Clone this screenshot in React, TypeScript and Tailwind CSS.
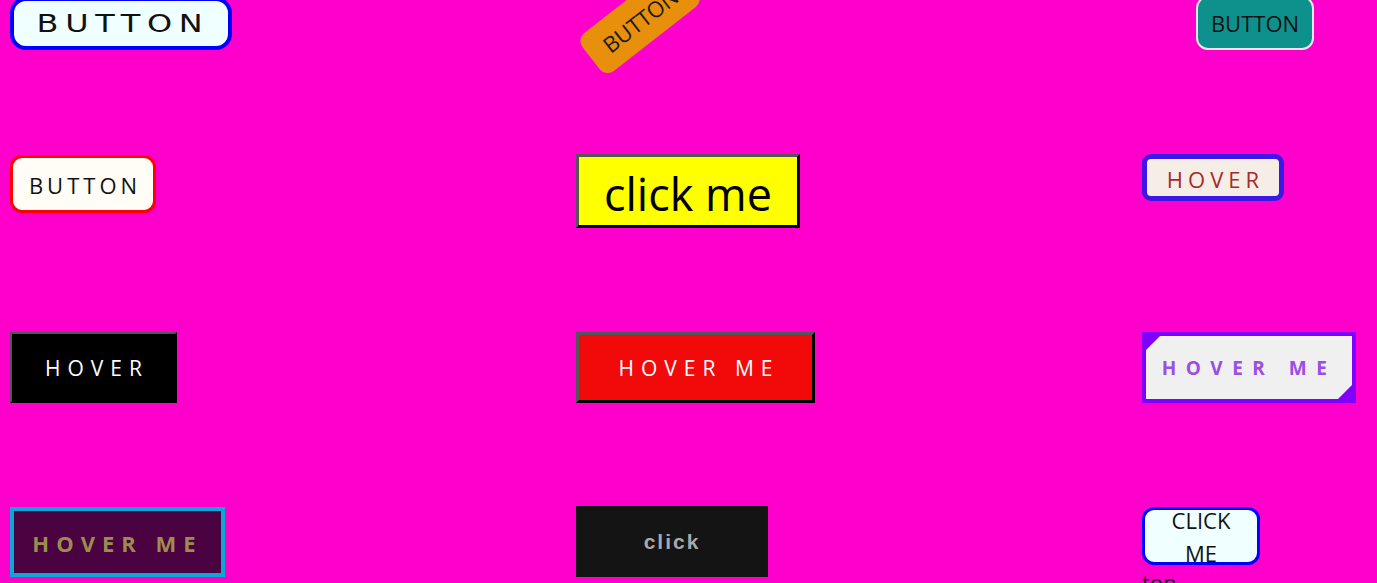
const sans = "font-['Open_Sans','Noto_Sans',sans-serif]";

export default function App() {
  return (
    <div className={`h-[583px] overflow-hidden bg-[#ff00cc] pl-[10px] ${sans}`}>
      {/* row 1 */}
      <div className="grid h-[154px] grid-cols-[566px_566px_1fr] items-start">
        <div>
          <button className="-mt-[3px] flex h-[53px] w-[222px] items-center justify-center rounded-[16px] border-4 border-[#0000ff] bg-[#f0ffff] pl-[4px]">
            <span className="inline-block origin-center scale-x-[1.33] font-['DejaVu_Sans',sans-serif] text-[24px] tracking-[5px] text-[#111]">
              BUTTON
            </span>
          </button>
        </div>
        <div>
          <button className="-mt-[4px] ml-[2px] flex h-[48px] w-[124px] -rotate-[38deg] items-center justify-center rounded-[10px] bg-[#e8900c] text-[22px] text-[#1a1a1a]">
            BUTTON
          </button>
        </div>
        <div>
          <button className="-mt-[4px] ml-[54px] flex h-[54px] w-[118px] items-center justify-center rounded-[12px] border-2 border-[#e8e8e8] bg-[#0e918c] text-[22px] text-[#111]">
            BUTTON
          </button>
        </div>
      </div>

      {/* row 2 */}
      <div className="grid h-[178px] grid-cols-[566px_566px_1fr] items-start">
        <div>
          <button className="mt-px flex h-[58px] w-[146px] items-center justify-center rounded-[12px] border-[3px] border-[#ff0000] bg-[#fffdf6] pl-[4px] pt-[2px] text-[22px] tracking-[4px] text-[#111]">
            BUTTON
          </button>
        </div>
        <div>
          <button className="flex h-[74px] w-[224px] items-center justify-center border-[3px] border-t-[#555] border-l-[#555] border-r-black border-b-black bg-[#ffff00] pt-[6px] text-[45px] text-black">
            click me
          </button>
        </div>
        <div>
          <button className="flex h-[47px] w-[142px] items-center justify-center rounded-[9px] border-[5px] border-[#3c17e8] bg-[#f4eee7] pl-[5px] pt-[3px] text-[22px] tracking-[5px] text-[#a52a2a]">
            HOVER
          </button>
        </div>
      </div>

      {/* row 3 */}
      <div className="grid h-[175px] grid-cols-[566px_566px_1fr] items-start">
        <div>
          <button className="flex h-[71px] w-[167px] items-center justify-center border-2 border-t-[#555] border-l-[#555] border-r-black border-b-black bg-black pl-[7px] pt-[3px] text-[21px] tracking-[7px] text-white">
            HOVER
          </button>
        </div>
        <div>
          <button className="flex h-[71px] w-[239px] items-center justify-center border-[3px] border-t-[#555] border-l-[#555] border-r-black border-b-black bg-[#f20a0a] pl-[7px] pt-[3px] text-[21px] tracking-[7px] text-white">
            HOVER ME
          </button>
        </div>
        <div>
          <button className="relative flex h-[71px] w-[214px] items-center justify-center border-4 border-[#8000ff] bg-[#f0f0f0] pt-[2px] text-[19px] font-bold tracking-[9.5px] text-[#9a4ee6]">
            <span className="absolute left-0 top-0 h-[14px] w-[14px] bg-[#8000ff] [clip-path:polygon(0_0,100%_0,0_100%)]" />
            <span className="absolute bottom-0 right-0 h-[14px] w-[14px] bg-[#8000ff] [clip-path:polygon(100%_0,100%_100%,0_100%)]" />
            HOVER ME
          </button>
        </div>
      </div>

      {/* row 4 */}
      <div className="grid grid-cols-[566px_566px_1fr] items-start">
        <div>
          <button className="flex h-[70px] w-[215px] items-center justify-center border-4 border-[#0aa8d8] bg-[#4b0240] pt-[2px] text-[22px] font-bold tracking-[7px] text-[#9b8d4f]">
            HOVER ME
          </button>
        </div>
        <div>
          <button className="-mt-px flex h-[71px] w-[192px] items-center justify-center bg-[#141414] font-['Liberation_Sans',Arial,sans-serif] text-[21px] font-bold tracking-[2px] text-[#a9a9a9]">
            click
          </button>
        </div>
        <div>
          <button className="flex h-[58px] w-[118px] flex-col items-center justify-start overflow-visible rounded-[12px] border-[3px] border-[#0000ff] bg-[#f0ffff] text-[22px] leading-[33px] text-[#111]">
            <span className="-mt-[6px]">CLICK</span>
            <span>ME</span>
          </button>
          <p className="mt-[2px] text-[22px] leading-[30px] text-[#111]">ton</p>
        </div>
      </div>
    </div>
  );
}
